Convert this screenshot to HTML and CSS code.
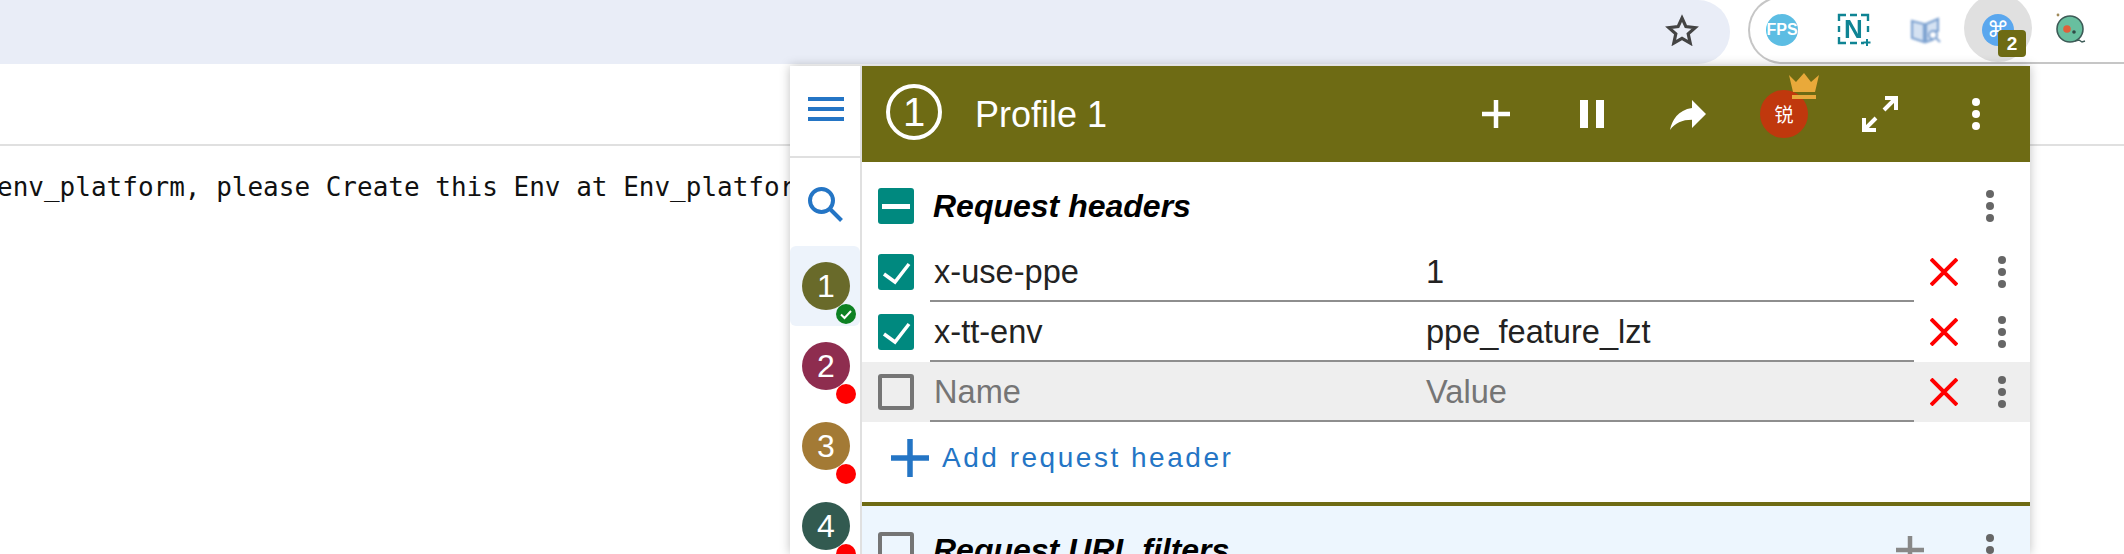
FILE: index.html
```html
<!DOCTYPE html>
<html lang="en">
<head>
    <meta charset="UTF-8">
    <title>Request headers</title>
    <link rel="stylesheet" href="styles.css">
</head>
<body>
    <div class="toolbar">
        <div class="omnibox">
            <svg class="star" width="34" height="32" viewBox="0 0 34 32"><path d="M17 4l3.9 8.6 9.3 1-7 6.3 2 9.2-8.2-4.7-8.2 4.7 2-9.2-7-6.3 9.3-1z" fill="none" stroke="#444" stroke-width="3.2"/></svg>
        </div>
        <div class="extensions">
            <div class="ext"><span class="ext-fps">FPS</span></div>
            <div class="ext">
                <svg width="34" height="34" viewBox="0 0 34 34" class="soft">
                    <path d="M2 8V2h7M13 2h7M24 2h7v6M2 13v6M31 13v6M2 24v6h7M13 30h7M24 30h3" fill="none" stroke="#0f8494" stroke-width="2.4"/>
                    <text x="16.5" y="25" text-anchor="middle" class="ext-n">N</text>
                    <path d="M30 26v7M26.500 29.500h7" stroke="#0f8494" stroke-width="2"/>
                </svg>
            </div>
            <div class="ext">
                <svg width="32" height="28" viewBox="0 0 32 28" class="blurred">
                    <path d="M2 5l12 3v18L2 22zM16 8l12-5v12h-4l-4 6 2 3-6 2z" fill="#d5e2f2" stroke="#7fa3d1" stroke-width="2.2"/>
                    <circle cx="23" cy="19" r="4" fill="#fff" stroke="#7fa3d1" stroke-width="2"/>
                    <path d="M26 22l4 4" stroke="#7fa3d1" stroke-width="2"/>
                </svg>
            </div>
            <div class="ext ext-active">
                <span class="ext-cmd">&#8984;</span>
                <span class="ext-badge">2</span>
            </div>
            <div class="ext">
                <svg width="36" height="36" viewBox="0 0 36 36" class="soft">
                    <circle cx="18" cy="17" r="13" fill="#68bf9f" stroke="#3d5b57" stroke-width="1.6"/>
                    <circle cx="15" cy="17" r="3.8" fill="#e0603a"/>
                    <circle cx="22" cy="20" r="1.8" fill="#2f4a46"/>
                    <circle cx="6" cy="3" r="1.4" fill="#a08a5a"/>
                    <path d="M23 29l4-1 3 2 3-1" fill="none" stroke="#3d5b57" stroke-width="1.4"/>
                </svg>
            </div>
        </div>
    </div>

    <div class="page-bar"></div>
    <p class="page-text">env_platform, please Create this Env at Env_platform</p>

    <div class="popup">
        <div class="sidebar">
            <div class="menu-cell"><span></span><span></span><span></span></div>
            <div class="search-cell">
                <svg width="36" height="36" viewBox="0 0 36 36"><circle cx="13.5" cy="14.5" r="11.5" fill="none" stroke="#2475c5" stroke-width="4"/><path d="M22 23l11.5 11.5" stroke="#2475c5" stroke-width="4"/></svg>
            </div>
            <div class="profile-item active">
                <div class="avatar a1">1
                    <span class="status ok"><svg width="20" height="20" viewBox="0 0 20 20"><path d="M5 10.5l3.500 3.500L15 7" fill="none" stroke="#fff" stroke-width="2"/></svg></span>
                </div>
            </div>
            <div class="profile-item"><div class="avatar a2">2<span class="status"></span></div></div>
            <div class="profile-item"><div class="avatar a3">3<span class="status"></span></div></div>
            <div class="profile-item"><div class="avatar a4">4<span class="status"></span></div></div>
        </div>

        <div class="main">
            <div class="header">
                <div class="profile-badge">1</div>
                <div class="profile-name">Profile 1</div>
                <div class="header-btn"><svg width="28" height="28" viewBox="0 0 28 28"><path d="M14 0v28M0 14h28" stroke="#fff" stroke-width="4.500"/></svg></div>
                <div class="header-btn"><div class="pause"><span></span><span></span></div></div>
                <div class="header-btn"><svg width="48" height="48" viewBox="0 0 24 24"><path d="M14 9V5l7 7-7 7v-4.100c-5 0-8.500 1.600-11 5.100 1-5 4-10 11-11z" fill="#fff"/></svg></div>
                <div class="header-btn">
                    <div class="user">&#38160;
                        <svg class="crown" width="30" height="26" viewBox="0 0 30 26"><path d="M0 2l7 7 8-9 7 9 8-7-4 17H4z" fill="#e9a93a"/><path d="M3 22h24v4H3z" fill="#e9a93a"/></svg>
                    </div>
                </div>
                <div class="header-btn"><svg width="36" height="36" viewBox="0 0 36 36"><path d="M23 2h11v12M33 3L22 14M2 22v12h12M3 33l11-11" fill="none" stroke="#fff" stroke-width="4"/></svg></div>
                <div class="header-btn"><span class="dots light"><i></i><i></i><i></i></span></div>
            </div>

            <div class="section-head">
                <span class="check on"><span class="minus"></span></span>
                <span class="section-title">Request headers</span>
                <span class="dots"><i></i><i></i><i></i></span>
            </div>

            <div class="row">
                <span class="check on"><svg width="36" height="36" viewBox="0 0 36 36"><path d="M6 20l11 8L31 10" fill="none" stroke="#fff" stroke-width="3.500"/></svg></span>
                <div class="fields"><span class="field-name">x-use-ppe</span><span class="field-value">1</span></div>
                <svg class="remove" width="28" height="28" viewBox="0 0 28 28"><path d="M1 1l26 26M27 1L1 27" stroke="#f00" stroke-width="4"/></svg>
                <span class="dots"><i></i><i></i><i></i></span>
            </div>
            <div class="row">
                <span class="check on"><svg width="36" height="36" viewBox="0 0 36 36"><path d="M6 20l11 8L31 10" fill="none" stroke="#fff" stroke-width="3.500"/></svg></span>
                <div class="fields"><span class="field-name">x-tt-env</span><span class="field-value">ppe_feature_lzt</span></div>
                <svg class="remove" width="28" height="28" viewBox="0 0 28 28"><path d="M1 1l26 26M27 1L1 27" stroke="#f00" stroke-width="4"/></svg>
                <span class="dots"><i></i><i></i><i></i></span>
            </div>
            <div class="row empty">
                <span class="check"></span>
                <div class="fields"><span class="field-name">Name</span><span class="field-value">Value</span></div>
                <svg class="remove" width="28" height="28" viewBox="0 0 28 28"><path d="M1 1l26 26M27 1L1 27" stroke="#f00" stroke-width="4"/></svg>
                <span class="dots"><i></i><i></i><i></i></span>
            </div>

            <div class="add-row">
                <svg width="38" height="38" viewBox="0 0 38 38"><path d="M19 0v38M0 19h38" stroke="#2475c5" stroke-width="5.500"/></svg>
                <span class="add-label">Add request header</span>
            </div>

            <div class="section-head filters">
                <span class="check"></span>
                <span class="section-title">Request URL filters</span>
                <svg class="filters-add" width="28" height="28" viewBox="0 0 28 28"><path d="M14 0v28M0 14h28" stroke="#888" stroke-width="4.500"/></svg>
                <span class="dots"><i></i><i></i><i></i></span>
            </div>
        </div>
    </div>
</body>
</html>
```

FILE: styles.css
```css
html, body {
    margin: 0;
    height: 554px;
    overflow: hidden;
    background: #fff;
    font-family: "Liberation Sans", Arial, sans-serif;
}

/* browser toolbar */
.toolbar {
    display: flex;
    height: 64px;
    position: relative;
    z-index: 2;
    background: #fff;
}
.omnibox {
    width: 1730px;
    flex: none;
    display: flex;
    align-items: center;
    justify-content: flex-end;
    padding-right: 31px;
    box-sizing: border-box;
    background: #e9edf7;
    border-radius: 0 32px 32px 0;
}
.star {
    margin-top: -4px;
}
.extensions {
    flex: 1;
    display: flex;
    margin: -4px 0 0 18px;
    height: 68px;
    box-sizing: border-box;
    border: 2px solid #c6c6c6;
    border-right: 0;
    border-radius: 34px 0 0 34px;
}
.ext {
    width: 72px;
    flex: none;
    display: flex;
    align-items: center;
    justify-content: center;
    position: relative;
}
.ext:first-child {
    margin-left: -4px;
}
.soft {
    filter: blur(0.3px);
}
.blurred {
    filter: blur(0.9px);
}
.ext-fps {
    width: 32px;
    height: 32px;
    border-radius: 50%;
    background: #5cbde3;
    color: #fff;
    font-size: 16px;
    font-weight: bold;
    line-height: 32px;
    text-align: center;
}
.ext-n {
    font-family: "Liberation Sans", sans-serif;
    font-size: 26px;
    font-weight: bold;
    fill: #0f8494;
}
.ext-active::before {
    content: "";
    position: absolute;
    left: 2px;
    top: -4px;
    width: 68px;
    height: 68px;
    border-radius: 50%;
    background: #e0e0e0;
}
.ext-cmd {
    position: relative;
    width: 32px;
    height: 32px;
    border-radius: 50%;
    background: #5aa7ee;
    color: #fff;
    font-family: "DejaVu Sans", sans-serif;
    font-size: 22px;
    line-height: 32px;
    text-align: center;
}
.ext-badge {
    position: absolute;
    left: 36px;
    top: 32px;
    width: 28px;
    height: 27px;
    border-radius: 4px;
    background: #6e6b14;
    color: #fff;
    font-size: 19px;
    font-weight: bold;
    line-height: 27px;
    text-align: center;
}

/* page behind the popup */
.page-bar {
    height: 80px;
    border-bottom: 2px solid #e0e0e0;
}
.page-text {
    margin: 24px 0 0 -3px;
    font-family: "DejaVu Sans Mono", monospace;
    font-size: 26px;
    line-height: 34px;
    white-space: nowrap;
    color: #111;
}

/* popup */
.popup {
    position: absolute;
    left: 790px;
    top: 66px;
    width: 1240px;
    height: 488px;
    display: flex;
    overflow: hidden;
    background: #fff;
    box-shadow: 0 0 10px rgba(0, 0, 0, 0.25);
    z-index: 3;
}
.sidebar {
    width: 72px;
    flex: none;
    box-sizing: border-box;
    border-right: 2px solid #e0e0e0;
}
.menu-cell {
    height: 92px;
    box-sizing: border-box;
    border-bottom: 2px solid #e0e0e0;
    padding: 31px 0 0 18px;
}
.menu-cell span {
    display: block;
    width: 36px;
    height: 4px;
    margin-bottom: 6px;
    background: #2475c5;
}
.search-cell {
    height: 88px;
    box-sizing: border-box;
    padding: 28px 0 0 18px;
}
.profile-item {
    height: 80px;
    box-sizing: border-box;
    padding-left: 2px;
    display: flex;
    align-items: center;
    justify-content: center;
    border-radius: 6px;
}
.profile-item.active {
    background: #edf3fb;
}
.avatar {
    width: 48px;
    height: 48px;
    border-radius: 50%;
    position: relative;
    color: #fff;
    font-size: 32px;
    line-height: 48px;
    text-align: center;
}
.a1 { background: #696a2a; }
.a2 { background: #8e2d4f; }
.a3 { background: #a37a35; }
.a4 { background: #325a50; }
.status {
    position: absolute;
    left: 34px;
    top: 42px;
    width: 20px;
    height: 20px;
    border-radius: 50%;
    background: #f00;
    display: flex;
}
.status.ok {
    background: #0d8123;
}

.main {
    flex: 1;
    min-width: 0;
}
.header {
    height: 96px;
    display: flex;
    align-items: center;
    padding: 0 6px 0 24px;
    background: #6e6b14;
    color: #fff;
}
.profile-badge {
    width: 56px;
    height: 56px;
    box-sizing: border-box;
    border: 4px solid #fff;
    border-radius: 50%;
    font-size: 40px;
    line-height: 48px;
    text-align: center;
    margin-top: -4px;
}
.profile-name {
    flex: 1;
    margin-left: 33px;
    padding-top: 2px;
    font-size: 36px;
}
.header-btn {
    width: 96px;
    flex: none;
    height: 96px;
    display: flex;
    align-items: center;
    justify-content: center;
}
.pause {
    display: flex;
    gap: 8px;
}
.pause span {
    width: 8px;
    height: 28px;
    background: #fff;
}
.user {
    width: 48px;
    height: 48px;
    border-radius: 50%;
    position: relative;
    background: #c0380d;
    color: #fff;
    font-family: "Noto Sans CJK SC", sans-serif;
    font-size: 19px;
    line-height: 48px;
    text-align: center;
}
.crown {
    position: absolute;
    left: 29px;
    top: -17px;
}
.dots {
    display: flex;
    flex-direction: column;
    gap: 4px;
    flex: none;
}
.dots i {
    display: block;
    width: 8px;
    height: 8px;
    border-radius: 50%;
    background: #666;
}
.dots.light i {
    background: #fff;
}

.section-head {
    display: flex;
    align-items: center;
    height: 60px;
    padding: 14px 36px 6px 16px;
}
.section-head.filters {
    background: #edf6fe;
    border-top: 4px solid #6e6b14;
}
.section-title {
    flex: 1;
    margin-left: 19px;
    font-size: 32px;
    font-weight: bold;
    font-style: italic;
    color: #000;
}
.filters-add {
    margin-right: 62px;
}
.check {
    width: 36px;
    height: 36px;
    flex: none;
    box-sizing: border-box;
    border: 4px solid #757575;
    border-radius: 3px;
}
.check.on {
    border: 0;
    background: #00897f;
    display: flex;
    align-items: center;
    justify-content: center;
}
.minus {
    width: 28px;
    height: 5px;
    background: #fff;
}

.row {
    display: flex;
    align-items: center;
    height: 60px;
    padding-left: 16px;
}
.row.empty {
    background: #eee;
}
.row.empty .field-name,
.row.empty .field-value {
    color: #757575;
}
.fields {
    display: flex;
    align-items: center;
    width: 984px;
    height: 60px;
    padding-top: 1px;
    flex: none;
    box-sizing: border-box;
    margin-left: 16px;
    border-bottom: 2px solid #8e8e8e;
    font-size: 32.6px;
    color: #222;
}
.field-name {
    width: 496px;
    flex: none;
    padding-left: 4px;
    box-sizing: border-box;
}
.remove {
    margin: 0 40px 0 16px;
    flex: none;
}
.add-row {
    display: flex;
    align-items: center;
    height: 80px;
    box-sizing: border-box;
    padding: 0 0 8px 29px;
    color: #2475c5;
}
.add-label {
    margin-left: 13px;
    font-size: 28px;
    letter-spacing: 0.09em;
}
```
